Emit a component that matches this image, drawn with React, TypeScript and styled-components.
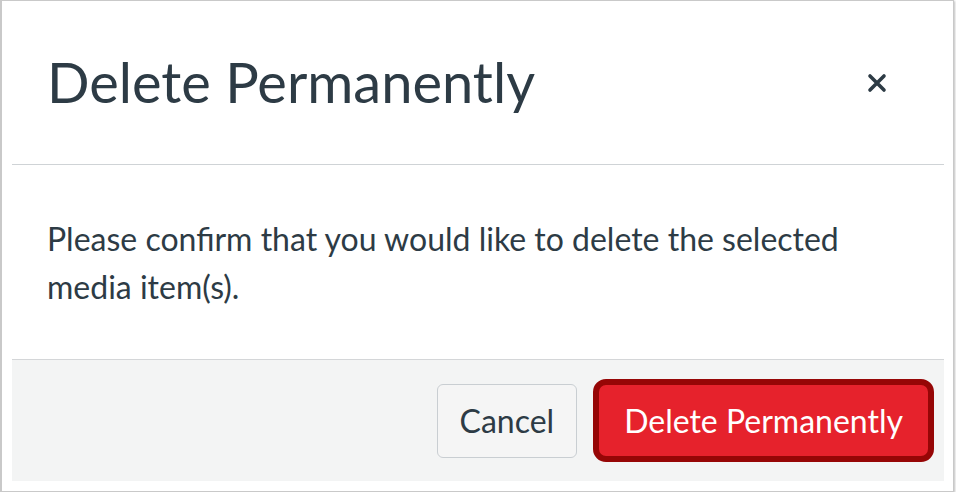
import React from "react";
import styled, { createGlobalStyle } from "styled-components";

const Global = createGlobalStyle`
  html, body { margin: 0; padding: 0; background: #ffffff; }
  body { font-family: Lato, "Noto Sans", sans-serif; }
`;

const Frame = styled.div`
  box-sizing: border-box;
  width: 954px;
  height: 492px;
  border: 1px solid #c9c9c9;
  border-left-width: 2px;
  box-shadow: 1px 1px 2px rgba(0, 0, 0, 0.25);
  padding: 0 9px 10px 10px;
  display: flex;
  flex-direction: column;
`;

const Dialog = styled.div`
  flex: 1;
  display: flex;
  flex-direction: column;
  background: #ffffff;
`;

const Header = styled.div`
  height: 164px;
  box-sizing: border-box;
  border-bottom: 1px solid #cfd3d6;
  display: flex;
  align-items: center;
  justify-content: space-between;
  padding: 0 56px 0 35px;
`;

const Title = styled.h1`
  margin: 0;
  font-family: Lato, sans-serif;
  font-weight: 400;
  font-size: 56px;
  line-height: 1;
  color: #2d3b45;
  padding-bottom: 2px;
`;

const CloseButton = styled.button`
  border: none;
  background: transparent;
  padding: 0;
  width: 22px;
  height: 22px;
  display: flex;
  align-items: center;
  justify-content: center;
  cursor: pointer;
  color: #2d3b45;
`;

const Body = styled.div`
  flex: 1;
  padding: 50px 36px 0 35px;
`;

const Message = styled.p`
  margin: 0;
  font-family: Lato, sans-serif;
  font-size: 32px;
  line-height: 48px;
  color: #2d3b45;
`;

const Footer = styled.div`
  height: 122px;
  box-sizing: border-box;
  background: #f3f4f4;
  border-top: 1px solid #d4d6d8;
  display: flex;
  align-items: center;
  justify-content: flex-end;
  gap: 16px;
  padding: 0 10px 0 0;
`;

const Button = styled.button<{ $variant?: "danger" | "default" }>`
  font-family: Lato, sans-serif;
  font-size: 32px;
  line-height: 1;
  box-sizing: border-box;
  cursor: pointer;
  ${(p) =>
    p.$variant === "danger"
      ? `
    height: 83px;
    padding: 0 25px;
    background: #e6222c;
    color: #ffffff;
    border: 6px solid #960606;
    border-radius: 13px;
  `
      : `
    height: 74px;
    padding: 0 22px;
    background: #f5f5f5;
    color: #2d3b45;
    border: 1px solid #c9ced2;
    border-radius: 6px;
  `}
`;

export default function App() {
  return (
    <>
      <Global />
      <Frame>
        <Dialog>
          <Header>
            <Title>Delete Permanently</Title>
            <CloseButton aria-label="Close">
              <svg width="20" height="20" viewBox="0 0 20 20">
                <path
                  d="M3 3 L17 17 M17 3 L3 17"
                  stroke="currentColor"
                  strokeWidth="3.6"
                  strokeLinecap="round"
                />
              </svg>
            </CloseButton>
          </Header>
          <Body>
            <Message>
              Please confirm that you would like to delete the selected
              <br />
              media item(s).
            </Message>
          </Body>
          <Footer>
            <Button>Cancel</Button>
            <Button $variant="danger">Delete Permanently</Button>
          </Footer>
        </Dialog>
      </Frame>
    </>
  );
}
